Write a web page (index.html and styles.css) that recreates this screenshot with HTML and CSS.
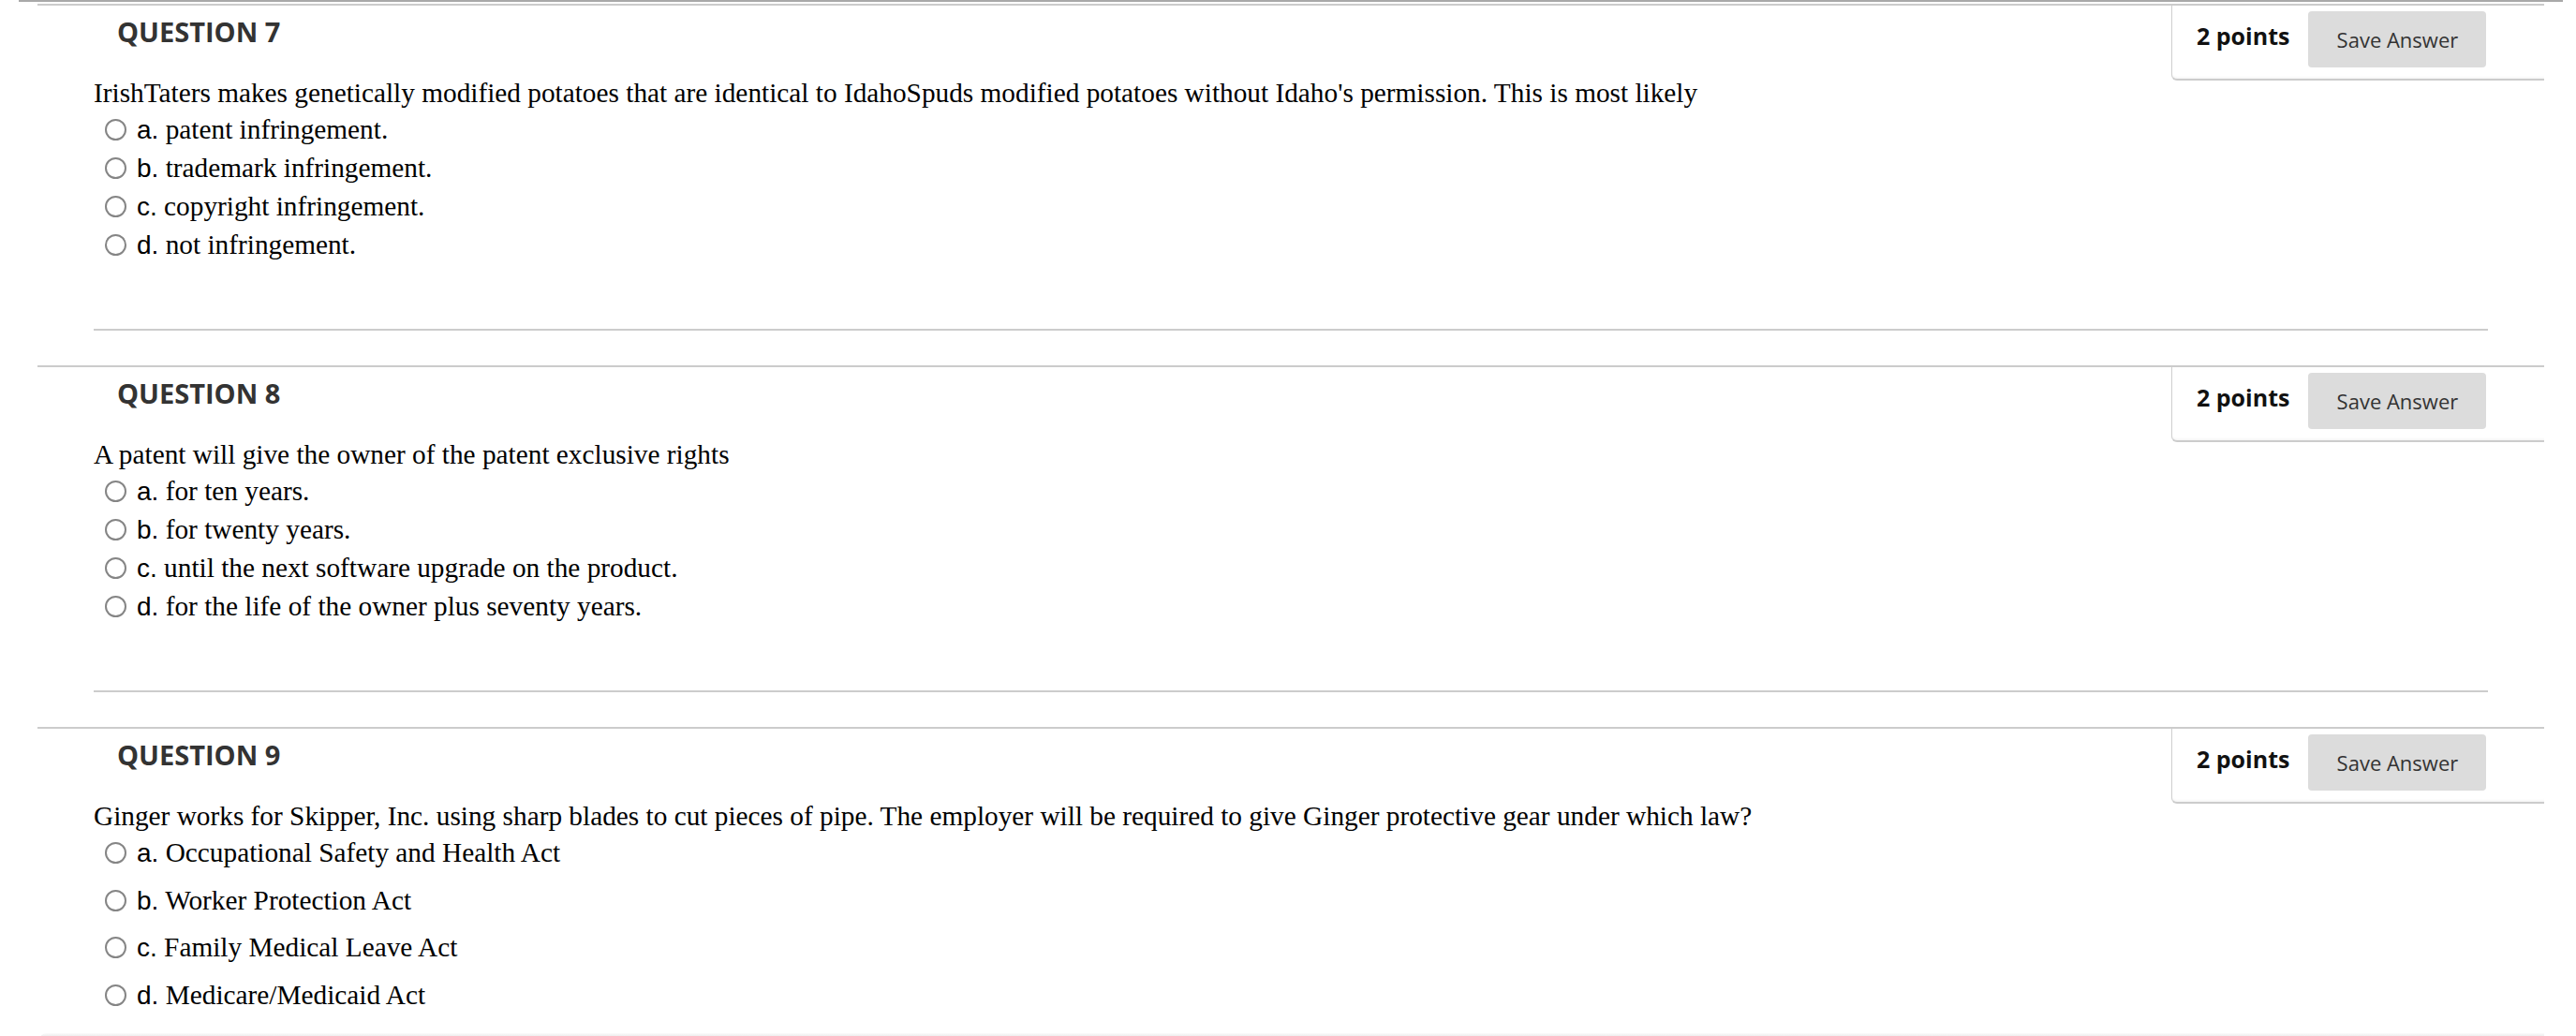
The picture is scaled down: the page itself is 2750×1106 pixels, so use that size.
FILE: index.html
```html
<!DOCTYPE html>
<html lang="en">
<head>
<meta charset="utf-8">
<title>Questions</title>
<link rel="stylesheet" href="styles.css">
</head>
<body>
<div class="topbar"></div>
<div class="container">
  <section class="question">
    <div class="q-head">
      <h3 class="q-title">QUESTION 7</h3>
      <div class="q-points"><span class="pts">2 points</span><button class="save" type="button">Save Answer</button></div>
    </div>
    <div class="q-body">
      <p class="q-text">IrishTaters makes genetically modified potatoes that are identical to IdahoSpuds modified potatoes without Idaho's permission. This is most likely</p>
      <ul class="answers">
        <li><span class="radio"></span><span class="letter">a.</span> patent infringement.</li>
        <li><span class="radio"></span><span class="letter">b.</span> trademark infringement.</li>
        <li><span class="radio"></span><span class="letter">c.</span> copyright infringement.</li>
        <li><span class="radio"></span><span class="letter">d.</span> not infringement.</li>
      </ul>
    </div>
    <div class="q-sep"></div>
  </section>
  <section class="question">
    <div class="q-head">
      <h3 class="q-title">QUESTION 8</h3>
      <div class="q-points"><span class="pts">2 points</span><button class="save" type="button">Save Answer</button></div>
    </div>
    <div class="q-body">
      <p class="q-text">A patent will give the owner of the patent exclusive rights</p>
      <ul class="answers">
        <li><span class="radio"></span><span class="letter">a.</span> for ten years.</li>
        <li><span class="radio"></span><span class="letter">b.</span> for twenty years.</li>
        <li><span class="radio"></span><span class="letter">c.</span> until the next software upgrade on the product.</li>
        <li><span class="radio"></span><span class="letter">d.</span> for the life of the owner plus seventy years.</li>
      </ul>
    </div>
    <div class="q-sep"></div>
  </section>
  <section class="question last">
    <div class="q-head">
      <h3 class="q-title">QUESTION 9</h3>
      <div class="q-points"><span class="pts">2 points</span><button class="save" type="button">Save Answer</button></div>
    </div>
    <div class="q-body">
      <p class="q-text">Ginger works for Skipper, Inc. using sharp blades to cut pieces of pipe. The employer will be required to give Ginger protective gear under which law?</p>
      <ul class="answers spaced">
        <li><span class="radio"></span><span class="letter">a.</span> Occupational Safety and Health Act</li>
        <li><span class="radio"></span><span class="letter">b.</span> Worker Protection Act</li>
        <li><span class="radio"></span><span class="letter">c.</span> Family Medical Leave Act</li>
        <li><span class="radio"></span><span class="letter">d.</span> Medicare/Medicaid Act</li>
      </ul>
    </div>
  </section>
  <div class="footer"></div>
</div>
</body>
</html>
```
FILE: styles.css
```css
html, body {
  margin: 0;
  padding: 0;
  background: #fff;
}
body {
  height: 1106px;
  overflow: hidden;
  font-family: "Liberation Serif", "Times New Roman", serif;
  color: #000;
}
.topbar {
  height: 2px;
  width: 2716px;
  margin-left: 20px;
  background: #a9a9a9;
}
.container {
  margin: 2px 0 0 40px;
  width: 2676px;
}
.question {
  border-top: 2px solid #cccccc;
  height: 384px;
}
.q-head {
  display: flex;
  justify-content: space-between;
  align-items: flex-start;
  height: 80px;
}
.q-title {
  margin: 8px 0 0 85px;
  font-family: "Open Sans", sans-serif;
  font-weight: 700;
  font-size: 29px;
  line-height: 40px;
  color: #333;
}
.q-points {
  box-sizing: border-box;
  width: 398px;
  height: 80px;
  display: flex;
  align-items: flex-start;
  gap: 20px;
  padding: 6px 60px 0 26px;
  border-left: 1px solid #cfcfcf;
  border-bottom: 2px solid #cccccc;
  border-bottom-left-radius: 6px;
  box-shadow: inset 0 -3px 3px -2px rgba(0,0,0,0.06);
  background: #fff;
}
.pts {
  font-family: "Open Sans", sans-serif;
  font-weight: 700;
  font-size: 25px;
  line-height: 30px;
  margin-top: 11px;
  color: #111;
  white-space: nowrap;
}
.save {
  width: 190px;
  height: 60px;
  border: none;
  border-radius: 4px;
  background: #dcdcdc;
  color: #333;
  font-family: "Open Sans", sans-serif;
  font-size: 22px;
  padding: 0;
}
.q-body {
  padding: 0 60px;
}
.q-text {
  margin: 0;
  font-size: 29.3px;
  line-height: 27px;
}
.answers {
  list-style: none;
  margin: 5px 0 0 0;
  padding: 0;
}
.answers li {
  font-size: 29.3px;
  line-height: 40px;
  white-space: nowrap;
}
.answers.spaced li + li {
  margin-top: 9.7px;
}
.radio {
  display: inline-block;
  box-sizing: border-box;
  width: 23px;
  height: 23px;
  border: 2px solid #858585;
  border-radius: 50%;
  margin: 0 11px 0 12px;
  vertical-align: -2px;
}
.letter {
  font-family: "Liberation Sans", Arial, sans-serif;
  font-size: 28px;
}
.q-sep {
  height: 2px;
  margin: 68.5px 60px 0 60px;
  background: #cccccc;
}
.question.last {
  height: auto;
  padding-bottom: 20px;
}
.footer {
  height: 7px;
  margin-left: 3px;
  width: 2673px;
  border-top-left-radius: 6px;
  background: linear-gradient(to bottom, #fbfbfb, #dddddd);
}
```
